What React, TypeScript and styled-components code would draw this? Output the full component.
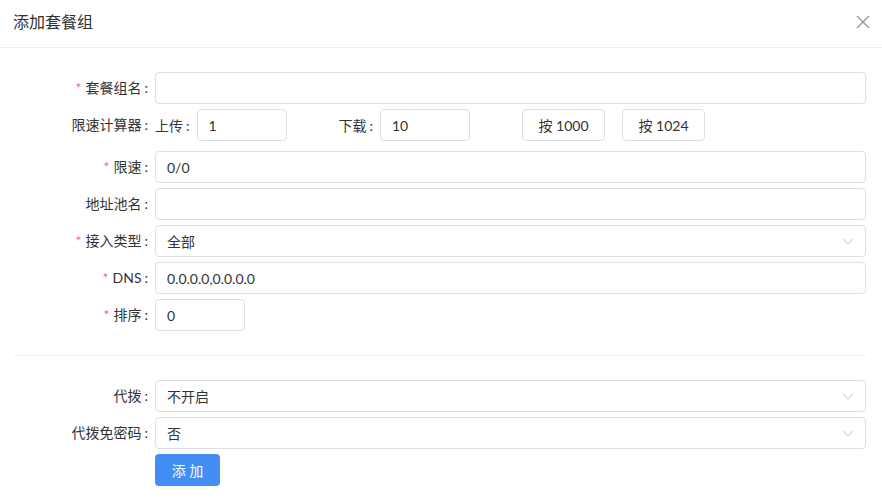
import styled, { createGlobalStyle } from 'styled-components'

const GlobalStyle = createGlobalStyle`
  html, body {
    margin: 0;
    padding: 0;
    background: #fff;
  }
  body {
    font-family: Lato, "Noto Sans CJK SC", sans-serif;
    font-size: 14px;
    color: #333;
  }
  * {
    box-sizing: border-box;
  }
`

interface FieldProps {
  label: string
  required?: boolean
  children: React.ReactNode
}

function Field({ label, required, children }: FieldProps) {
  return (
    <Row>
      <Label>
        {required && <Star>*</Star>}
        {label}
        <Colon>:</Colon>
      </Label>
      <Control>{children}</Control>
    </Row>
  )
}

function Chevron() {
  return (
    <svg width="12" height="12" viewBox="0 0 12 12" fill="none">
      <path d="M1 4 L6 9 L11 4" stroke="#c0c4cc" strokeWidth="1" />
    </svg>
  )
}

function SelectBox({ value }: { value: string }) {
  return (
    <Select>
      <span>{value}</span>
      <Chevron />
    </Select>
  )
}

export default function App() {
  return (
    <>
      <GlobalStyle />
      <Dialog>
        <Header>
          <Title>添加套餐组</Title>
          <Close aria-label="close">
            <svg width="14" height="14" viewBox="0 0 14 14" fill="none">
              <path d="M1 1 L13 13 M13 1 L1 13" stroke="#909399" strokeWidth="1.3" />
            </svg>
          </Close>
        </Header>
        <Body>
          <Section>
            <Field label="套餐组名" required>
              <Input defaultValue="" />
            </Field>
            <Row wide>
              <Label>
                限速计算器<Colon>:</Colon>
              </Label>
              <Control>
                <InlineGroup>
                  <InlineLabel>
                    上传<Colon>:</Colon>
                  </InlineLabel>
                  <Input small defaultValue="1" />
                </InlineGroup>
                <InlineGroup>
                  <InlineLabel>
                    下载<Colon>:</Colon>
                  </InlineLabel>
                  <Input small defaultValue="10" />
                </InlineGroup>
                <PlainButton>按 1000</PlainButton>
                <PlainButton>按 1024</PlainButton>
              </Control>
            </Row>
            <Field label="限速" required>
              <Input defaultValue="0/0" />
            </Field>
            <Field label="地址池名">
              <Input defaultValue="" />
            </Field>
            <Field label="接入类型" required>
              <SelectBox value="全部" />
            </Field>
            <Field label="DNS" required>
              <Input defaultValue="0.0.0.0,0.0.0.0" />
            </Field>
            <Field label="排序" required>
              <Input small defaultValue="0" />
            </Field>
          </Section>
          <Divider />
          <Section>
            <Field label="代拨">
              <SelectBox value="不开启" />
            </Field>
            <Field label="代拨免密码">
              <SelectBox value="否" />
            </Field>
            <Row>
              <Label />
              <Control>
                <PrimaryButton>添 加</PrimaryButton>
              </Control>
            </Row>
          </Section>
        </Body>
      </Dialog>
    </>
  )
}

const Dialog = styled.div`
  width: 882px;
  height: 503px;
  background: #fff;
  overflow: hidden;
`

const Header = styled.div`
  height: 48px;
  display: flex;
  align-items: center;
  justify-content: space-between;
  padding: 0 12px 4px 13px;
  border-bottom: 1px solid #ebeef5;
`

const Title = styled.div`
  font-size: 16px;
  color: #303133;
  line-height: 24px;
`

const Close = styled.button`
  border: none;
  background: none;
  padding: 0;
  width: 14px;
  height: 14px;
  display: flex;
  cursor: pointer;
`

const Body = styled.div`
  padding: 24px 16px 0 14px;
`

const Section = styled.div`
  display: flex;
  flex-direction: column;
  gap: 5px;
`

const Row = styled.div<{ wide?: boolean }>`
  display: flex;
  align-items: center;
  height: 32px;
  margin-bottom: ${({ wide }) => (wide ? '5px' : '0')};
`

const Label = styled.label`
  width: 141px;
  flex-shrink: 0;
  text-align: right;
  padding-right: 7px;
  line-height: 32px;
  color: #333;
  white-space: nowrap;
`

const Colon = styled.span`
  margin-left: 3px;
`

const Star = styled.span`
  color: #f56c6c;
  margin-right: 4px;
`

const Control = styled.div`
  flex: 1;
  display: flex;
  align-items: center;
  height: 32px;
`

const Input = styled.input<{ small?: boolean }>`
  width: ${({ small }) => (small ? '90px' : '100%')};
  flex-shrink: 0;
  height: 32px;
  border: 1px solid #dcdfe6;
  border-radius: 4px;
  padding: 0 11px;
  font: inherit;
  color: #333;
  outline: none;
  background: #fff;
`

const Select = styled.div`
  width: 100%;
  height: 32px;
  border: 1px solid #dcdfe6;
  border-radius: 4px;
  padding: 0 11px;
  display: flex;
  align-items: center;
  justify-content: space-between;
  color: #333;
`

const InlineGroup = styled.div`
  display: flex;
  align-items: center;
  margin-right: 52px;
`

const InlineLabel = styled.span`
  margin-right: 7px;
  white-space: nowrap;
`

const PlainButton = styled.button`
  height: 32px;
  width: 83px;
  border: 1px solid #dcdfe6;
  border-radius: 4px;
  background: #fff;
  font: inherit;
  color: #333;
  margin-right: 17px;
  padding: 0;
  cursor: pointer;
`

const PrimaryButton = styled.button`
  height: 32px;
  width: 65px;
  border: none;
  border-radius: 4px;
  background: #428ef5;
  color: #fff;
  font: inherit;
  padding: 0;
  cursor: pointer;
`

const Divider = styled.div`
  height: 1px;
  background: #ebeef5;
  margin: 24px 0;
`
